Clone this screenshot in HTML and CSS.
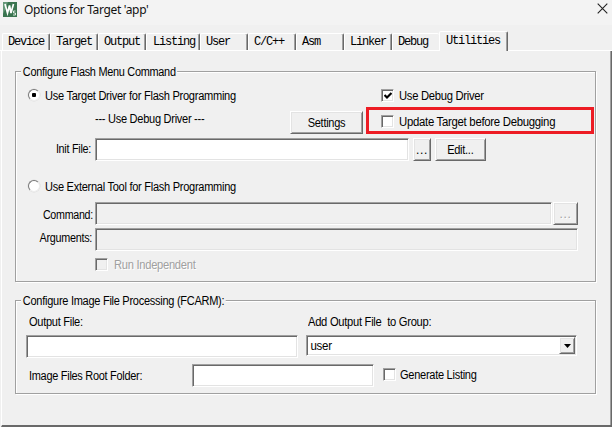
FILE: index.html
```html
<!DOCTYPE html>
<html lang="en">
<head>
<meta charset="utf-8">
<title>Options for Target 'app'</title>
<link rel="stylesheet" href="styles.css">
</head>
<body>
<header class="titlebar">
  <svg class="logo" width="14" height="15" viewBox="0 0 14 15"><rect width="14" height="15" fill="#3a7550"/><path d="M0 0H5L2 8L0 12Z" fill="#66987a"/><path d="M2 2L4.5 11L6.5 3.5L8 11L10.5 2" fill="none" stroke="#fff" stroke-width="1.7"/><path d="M12.5 9H10.5V11H12.5V13H10" fill="none" stroke="#dcebe0" stroke-width="1"/></svg>
  <h1 class="title">Options for Target 'app'</h1>
  <svg class="close" width="11" height="11" viewBox="0 0 11 11"><path d="M.7.7L10.3 10.3M10.3.7L.7 10.3" stroke="#222" stroke-width="1.1"/></svg>
</header>
<nav class="tabs">
  <span class="tab">Device</span><span class="tab">Target</span><span class="tab">Output</span><span class="tab tab-wide">Listing</span><span class="tab">User</span><span class="tab">C/C++</span><span class="tab">Asm</span><span class="tab">Linker</span><span class="tab tab-last">Debug</span><span class="tab active">Utilities</span>
</nav>
<main class="panel">
  <section class="group flash">
    <h2 class="legend legend-flash">Configure Flash Menu Command</h2>
    <div class="row row-driver">
      <span class="radio on"></span><span class="label driver">Use Target Driver for Flash Programming</span>
      <span class="check"><svg width="8" height="8" viewBox="0 0 8 8"><path d="M.5 3L3 5.5L7.5 1" fill="none" stroke="#000" stroke-width="2.2"/></svg></span><span class="label debug-driver">Use Debug Driver</span>
    </div>
    <div class="row row-settings">
      <span class="label current">--- Use Debug Driver ---</span>
      <span class="button settings"><span class="caption">Settings</span></span>
      <div class="highlight"><span class="check"></span><span class="label update">Update Target before Debugging</span></div>
    </div>
    <div class="row row-init">
      <span class="label right init">Init File:</span><span class="field init-field"></span>
      <span class="button browse">...</span><span class="button edit"><span class="caption">Edit...</span></span>
    </div>
    <div class="row row-external"><span class="radio"></span><span class="label external">Use External Tool for Flash Programming</span></div>
    <div class="row row-command"><span class="label right command">Command:</span><span class="field off command-field"></span><span class="button off browse-off">...</span></div>
    <div class="row row-args"><span class="label right args">Arguments:</span><span class="field off args-field"></span></div>
    <div class="row row-run"><span class="check off"></span><span class="label off run">Run Independent</span></div>
  </section>
  <section class="group image">
    <h2 class="legend legend-image">Configure Image File Processing (FCARM):</h2>
    <div class="row row-names"><span class="label output">Output File:</span><span class="label add">Add Output File&nbsp; to Group:</span></div>
    <div class="row row-fields"><span class="field output-field"></span><span class="field select"><span class="value">user</span><span class="button drop"><svg width="7" height="4" viewBox="0 0 7 4"><path d="M0 0H7L3.5 4Z"/></svg></span></span></div>
    <div class="row row-folder"><span class="label folder">Image Files Root Folder:</span><span class="field folder-field"></span><span class="check"></span><span class="label generate">Generate Listing</span></div>
  </section>
</main>
</body>
</html>
```
FILE: styles.css
```css
* { box-sizing: border-box; }
body { margin: 0; width: 612px; height: 427px; overflow: hidden; background: #f0f0f0; color: #000; font: 12px/14px "Liberation Sans", sans-serif; letter-spacing: -.3px; }
h1, h2 { margin: 0; font-size: 12px; font-weight: normal; }
.titlebar { display: flex; height: 25px; padding: 2px 4px 0 3px; background: #f3f3f3; }
.title { margin-left: 7px; font: 12px/16px "Noto Sans", sans-serif; letter-spacing: -.33px; color: #111; }
.close { margin: 1px 0 0 auto; }
.tabs { display: flex; align-items: flex-end; height: 26px; padding-left: 2px; border-bottom: 1px solid #fff; }
.tab { width: 48px; height: 17px; padding: 1px 0 0 5px; border: solid; border-width: 1px 1px 0 1px; border-color: #fff #696969 transparent #fff; border-radius: 2px 2px 0 0; box-shadow: inset -1px 0 0 #a0a0a0; font: 12px/15px "Liberation Mono", monospace; letter-spacing: -1.2px; white-space: pre; }
.tab-wide { width: 54px; padding-left: 6px; }
.tab-last { width: 47px; border-right: 0; box-shadow: none; }
.active { position: relative; top: 1px; width: 69px; height: 20px; padding: 2px 0 0 6px; background: #f0f0f0; }
.panel { height: 376px; border: solid; border-width: 0 1px 2px 1px; border-color: #fff #696969 #696969 #fff; box-shadow: inset -1px 0 0 #a0a0a0; margin-left: 1px; padding: 20px 0 0 13px; }
.group { width: 581px; border: 1px solid #a0a0a0; box-shadow: 1px 1px 0 #fff, inset 1px 1px 0 #fff; }
.flash { height: 211px; }
.image { height: 94px; margin-top: 18px; }
.legend { width: max-content; height: 14px; margin: -7px 0 0 5px; padding: 0 2px; background: #f0f0f0; line-height: 14px; transform-origin: left; }
.legend-flash { transform: scaleX(.908); }
.legend-image { transform: scaleX(.918); }
.row { display: flex; align-items: flex-start; }
.label { white-space: pre; transform-origin: left; }
.right { text-align: right; transform-origin: right; }
.caption { transform: scaleX(.92); }
.radio { flex: none; width: 12px; height: 12px; border: 1px solid; border-color: #777 #eee #eee #777; border-radius: 50%; background: #fff; box-shadow: 0 0 0 .5px #ddd; }
.on { background: radial-gradient(circle, #000 0 2px, #fff 2.5px); }
.check { flex: none; display: flex; align-items: center; justify-content: center; width: 13px; height: 13px; background: #fff; border: 1px solid; border-color: #a0a0a0 #fff #fff #a0a0a0; box-shadow: inset 1px 1px 0 #696969, inset -1px -1px 0 #e3e3e3; }
.field { flex: none; height: 23px; background: #fff; border: 1px solid; border-color: #a0a0a0 #fff #fff #a0a0a0; box-shadow: inset 1px 1px 0 #696969, inset -1px -1px 0 #e3e3e3; }
.field.off, .check.off { background: #f0f0f0; }
.label.off { color: #a0a0a0; text-shadow: 1px 1px 0 #fff; }
.button { flex: none; display: flex; align-items: center; justify-content: center; height: 23px; background: #f0f0f0; border: 1px solid; border-color: #fff #696969 #696969 #fff; box-shadow: inset 1px 1px 0 #e3e3e3, inset -1px -1px 0 #a0a0a0; }
.button.off { color: #a0a0a0; text-shadow: 1px 1px 0 #fff; }
.row-driver { height: 28px; padding: 10px 0 0 12px; }
.driver { width: 336px; margin-left: 5px; transform: scaleX(.923); }
.debug-driver { margin-left: 5px; transform: scaleX(.935); }
.row-settings { height: 31px; padding-left: 79px; }
.current { width: 195px; margin-top: 5px; transform: scaleX(.92); }
.settings { width: 73px; margin-top: 4px; }
.highlight { display: flex; width: 228px; height: 27px; margin-left: 3px; padding: 5px 0 0 12px; border: 3px solid #ed1c24; }
.update { margin-left: 5px; transform: scaleX(.947); }
.row-init { height: 42px; }
.init { width: 75px; margin-top: 4px; transform: scaleX(.9); }
.init-field { width: 314px; margin-left: 4px; }
.browse, .browse-off { letter-spacing: .7px; }
.browse { width: 18px; margin-left: 4px; }
.edit { width: 51px; margin-left: 4px; }
.row-external { height: 22px; padding-left: 12px; }
.external { margin-left: 5px; transform: scaleX(.92); }
.command { width: 77px; margin-top: 6px; transform: scaleX(.89); }
.command-field { width: 457px; margin-left: 2px; }
.browse-off { width: 25px; margin-left: 1px; }
.row-args { margin-top: 3px; }
.args { width: 76px; margin-top: 3px; transform: scaleX(.9); }
.args-field { width: 483px; margin-left: 3px; }
.row-run { padding: 7px 0 0 79px; }
.run { margin-left: 6px; transform: scaleX(.93); }
.row-names { padding-top: 7px; }
.output { width: 279px; margin-left: 13px; transform: scaleX(.92); }
.add { transform: scaleX(.932); }
.row-fields { padding: 6px 0 0 10px; }
.output-field { width: 272px; }
.select { display: flex; justify-content: space-between; width: 271px; height: 21px; margin-left: 8px; padding: 1px; }
.value { margin: 2px 0 0 2px; transform: scaleX(.96); }
.drop { width: 16px; height: 17px; }
.row-folder { padding: 6px 0 0 13px; }
.folder { width: 163px; margin-top: 5px; transform: scaleX(.912); }
.folder-field { width: 182px; }
.row-folder .check { margin: 4px 4px 0 9px; }
.generate { margin-top: 4px; transform: scaleX(.92); }
```
